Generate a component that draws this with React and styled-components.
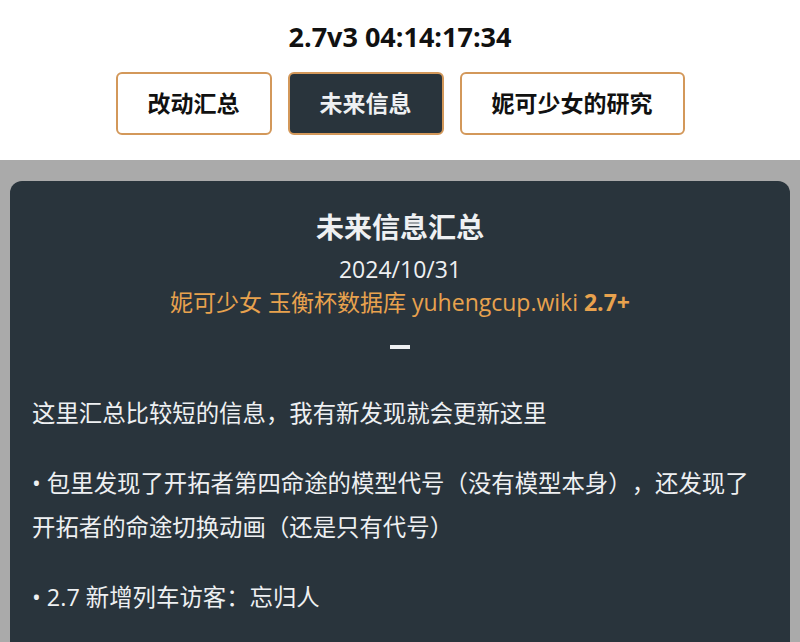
import React from "react";
import styled, { createGlobalStyle } from "styled-components";

const GlobalStyle = createGlobalStyle`
  html, body {
    margin: 0;
    padding: 0;
    background: #aaaaaa;
    font-family: "Open Sans", "Noto Sans CJK SC", sans-serif;
    text-spacing-trim: space-all;
  }
`;

const tabs = [
  { label: "改动汇总" },
  { label: "未来信息", active: true },
  { label: "妮可少女的研究" },
];

const notes = [
  "这里汇总比较短的信息，我有新发现就会更新这里",
  "• 包里发现了开拓者第四命途的模型代号（没有模型本身），还发现了开拓者的命途切换动画（还是只有代号）",
  "• 2.7 新增列车访客：忘归人",
];

const App = () => {
  return (
    <>
      <GlobalStyle />
      <Header>
        <Version>2.7v3 04:14:17:34</Version>
        <Tabs>
          {tabs.map((t) => (
            <Tab key={t.label} $active={t.active}>
              {t.label}
            </Tab>
          ))}
        </Tabs>
      </Header>
      <Main>
        <Card>
          <CardTitle>未来信息汇总</CardTitle>
          <DateLine>2024/10/31</DateLine>
          <Source>
            妮可少女 玉衡杯数据库 yuhengcup.wiki <b>2.7+</b>
          </Source>
          <Dash />
          {notes.map((n, i) => (
            <Note key={i}>{n}</Note>
          ))}
        </Card>
      </Main>
    </>
  );
};

export default App;

const Header = styled.header`
  background: #ffffff;
  padding: 20px 0 25px;
  display: flex;
  flex-direction: column;
  align-items: center;
`;

const Version = styled.div`
  font-size: 27px;
  line-height: 34px;
  font-weight: 700;
  color: #111;
`;

const Tabs = styled.nav`
  margin-top: 18px;
  display: flex;
  gap: 16px;
`;

const Tab = styled.button`
  font-family: inherit;
  font-size: 23px;
  font-weight: 700;
  line-height: 33px;
  padding: 13px 30px;
  border: 2px solid #d3985a;
  border-radius: 6px;
  background: ${(p) => (p.$active ? "#29343c" : "#ffffff")};
  color: ${(p) => (p.$active ? "#eef0f2" : "#111111")};
  cursor: pointer;
`;

const Main = styled.main`
  padding: 21px 10px 40px;
`;

const Card = styled.section`
  background: #29343c;
  border-radius: 12px;
  padding: 26px 22px 30px;
  color: #eef0f2;
  display: flex;
  flex-direction: column;
`;

const CardTitle = styled.h1`
  margin: 0;
  text-align: center;
  font-size: 28px;
  line-height: 40px;
  font-weight: 700;
`;

const DateLine = styled.div`
  margin-top: 6px;
  text-align: center;
  font-size: 23px;
  line-height: 33px;
`;

const Source = styled.div`
  text-align: center;
  font-size: 23px;
  line-height: 33px;
  color: #e8a24e;
  b {
    font-weight: 700;
  }
`;

const Dash = styled.div`
  align-self: center;
  width: 20px;
  height: 4px;
  margin: 26px 0 42px;
  background: #eef0f2;
`;

const Note = styled.p`
  margin: 0 0 26px;
  font-size: 23.4px;
  line-height: 44px;
`;
